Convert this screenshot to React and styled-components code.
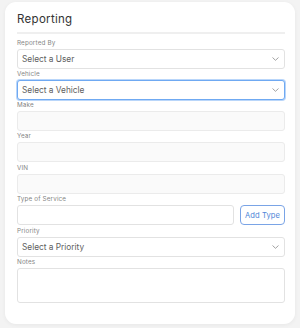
import styled, { createGlobalStyle } from 'styled-components'

const Global = createGlobalStyle`
	html, body {
		margin: 0;
		padding: 0;
		background: #f3f3f3;
	}
	body {
		font-family: Inter, 'Noto Sans', Arial, sans-serif;
	}
	* { box-sizing: border-box; }
`

const Card = styled.div`
	width: 290px;
	margin: 2px 5px 5px;
	background: #fff;
	border-radius: 11px;
	box-shadow: 0 1px 4px rgba(0, 0, 0, 0.05);
	padding: 10px 10px 21px 12px;
`

const Title = styled.h2`
	margin: 0;
	font-size: 11.5px;
	line-height: 15px;
	font-weight: 400;
	color: #333;
	letter-spacing: 0.3px;
`

const Divider = styled.div`
	height: 1.5px;
	background: #efefef;
	margin: 5px 0 5px;
`

const Form = styled.form`
	display: flex;
	flex-direction: column;
	gap: 1.3px;
`

const Field = styled.div`
	display: flex;
	flex-direction: column;
`

const Label = styled.label`
	font-size: 6.3px;
	line-height: 9px;
	color: #858585;
	margin-bottom: 1px;
	letter-spacing: 0.15px;
`

const Input = styled.input`
	height: 20px;
	width: 100%;
	border: 1px solid ${(p) => (p.muted ? '#ebebeb' : '#e2e2e2')};
	background: ${(p) => (p.muted ? '#fafafa' : '#fff')};
	border-radius: 3px;
	outline: none;
	font: inherit;
`

const TextArea = styled.textarea`
	height: 34.5px;
	width: 100%;
	border: 1px solid #e2e2e2;
	border-radius: 3px;
	resize: none;
	outline: none;
	font: inherit;
`

const SelectWrap = styled.div`
	position: relative;
`

const Select = styled.div`
	height: 20px;
	display: flex;
	align-items: center;
	padding: 0 0 0 4px;
	font-size: 8.3px;
	color: #5e5e5e;
	background: #fff;
	border-radius: 3px;
	border: ${(p) => (p.focused ? '1px solid #6fa9f2' : '1px solid #e2e2e2')};
	box-shadow: ${(p) => (p.focused ? '0 0 0 1px #b9d6fa' : 'none')};
`

const Chevron = styled.svg`
	position: absolute;
	right: 6px;
	top: 8px;
	width: 7px;
	height: 4px;
`

const Row = styled.div`
	display: flex;
	gap: 6px;
`

const AddButton = styled.button`
	flex: 0 0 45px;
	height: 20.5px;
	border: 1px solid #7aa4e6;
	background: #fff;
	color: #4f86d8;
	border-radius: 4px;
	font-family: inherit;
	font-size: 7.6px;
	font-weight: 400;
	letter-spacing: 0.1px;
	padding: 0;
	white-space: nowrap;
`

const SelectField = ({ label, placeholder, focused }) => (
	<Field>
		<Label>{label}</Label>
		<SelectWrap>
			<Select focused={focused}>{placeholder}</Select>
			<Chevron viewBox='0 0 7 4'>
				<path d='M0.5 0.5 L3.5 3.3 L6.5 0.5' fill='none' stroke='#8a8a8a' strokeWidth='0.8' />
			</Chevron>
		</SelectWrap>
	</Field>
)

const App = () => {
	return (
		<>
			<Global />
			<Card>
				<Title>Reporting</Title>
				<Divider />
				<Form>
					<SelectField label='Reported By' placeholder='Select a User' />
					<SelectField label='Vehicle' placeholder='Select a Vehicle' focused />
					<Field>
						<Label>Make</Label>
						<Input muted />
					</Field>
					<Field>
						<Label>Year</Label>
						<Input muted />
					</Field>
					<Field>
						<Label>VIN</Label>
						<Input muted />
					</Field>
					<Field>
						<Label>Type of Service</Label>
						<Row>
							<Input />
							<AddButton type='button'>Add Type</AddButton>
						</Row>
					</Field>
					<SelectField label='Priority' placeholder='Select a Priority' />
					<Field>
						<Label>Notes</Label>
						<TextArea />
					</Field>
				</Form>
			</Card>
		</>
	)
}

export default App
